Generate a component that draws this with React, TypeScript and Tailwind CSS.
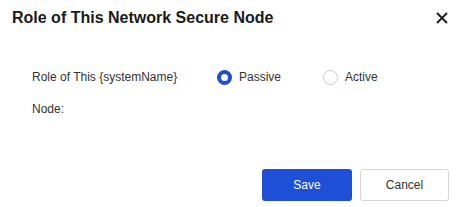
import React from "react";

export default function App() {
  return (
    <div className="w-[468px] h-[207px] bg-white flex flex-col" style={{ fontFamily: '"Liberation Sans", Arial, sans-serif' }}>
      <div className="flex items-center justify-between pl-[12px] pr-[20px] h-[35px]">
        <div className="text-[16px] font-bold text-[#1a1a1a]">Role of This Network Secure Node</div>
        <svg width="12" height="12" viewBox="0 0 12 12" className="text-[#222]">
          <path d="M1 1 L11 11 M11 1 L1 11" stroke="currentColor" strokeWidth="2" />
        </svg>
      </div>
      <div className="flex flex-col pl-[32px] pt-[32px] text-[12px] text-[#333]">
        <div className="flex items-center h-[20px]">
          <div className="w-[185px]">Role of This {"{systemName}"}</div>
          <label className="flex items-center gap-[7px] w-[106px]">
            <span className="w-[15px] h-[15px] rounded-full border-[4px] border-[#1f4fd6] bg-white" />
            <span>Passive</span>
          </label>
          <label className="flex items-center gap-[7px]">
            <span className="w-[15px] h-[15px] rounded-full border border-[#c8c8c8] bg-white" />
            <span>Active</span>
          </label>
        </div>
        <div className="mt-[12px] h-[20px] flex items-center">Node:</div>
      </div>
      <div className="flex-1" />
      <div className="flex justify-end gap-[8px] pr-[19px] pb-[6px]">
        <button className="w-[90px] h-[32px] rounded-[3px] bg-[#1f4fd6] text-white text-[12px]">Save</button>
        <button className="w-[89px] h-[32px] rounded-[3px] border border-[#d6d6d6] bg-white text-[#333] text-[12px]">Cancel</button>
      </div>
    </div>
  );
}
